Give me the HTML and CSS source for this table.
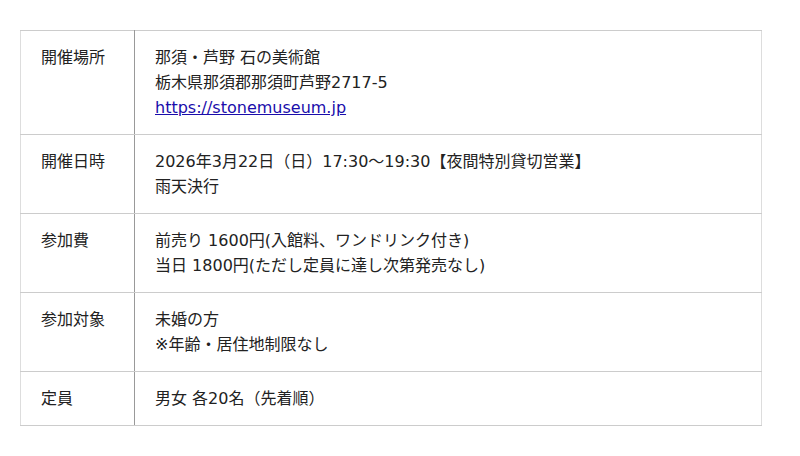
FILE: index.html
```html
<!DOCTYPE html>
<html lang="ja">
<head>
<meta charset="utf-8">
<link rel="stylesheet" href="styles.css">
</head>
<body>
<table class="info">
  <tr>
    <th>開催場所</th>
    <td>那須・芦野 石の美術館<br>栃木県那須郡那須町芦野2717-5<br><a href="#">https://stonemuseum.jp</a></td>
  </tr>
  <tr>
    <th>開催日時</th>
    <td>2026年3月22日（日）17:30～19:30【夜間特別貸切営業】<br>雨天決行</td>
  </tr>
  <tr>
    <th>参加費</th>
    <td>前売り 1600円(入館料、ワンドリンク付き)<br>当日 1800円(ただし定員に達し次第発売なし)</td>
  </tr>
  <tr>
    <th>参加対象</th>
    <td>未婚の方<br>※年齢・居住地制限なし</td>
  </tr>
  <tr>
    <th>定員</th>
    <td>男女 各20名（先着順）</td>
  </tr>
</table>
</body>
</html>
```
FILE: styles.css
```css
html, body {
  margin: 0;
  background: #fff;
}
body {
  padding: 30px 20px;
  font-family: "DejaVu Sans", "Noto Sans CJK JP", sans-serif;
  font-size: 16px;
  line-height: 25px;
  color: #222;
}
.info {
  width: 742px;
  border-collapse: collapse;
  border: 1px solid #ddd;
}
.info th, .info td {
  padding: 14px 20px;
  text-align: left;
  vertical-align: top;
  font-weight: normal;
  border-top: 1px solid #ccc;
  border-bottom: 1px solid #ccc;
}
.info th {
  width: 73px;
  border-right: 1px solid #999;
}
.info a {
  color: #1a0dab;
  text-decoration: underline;
}
```
